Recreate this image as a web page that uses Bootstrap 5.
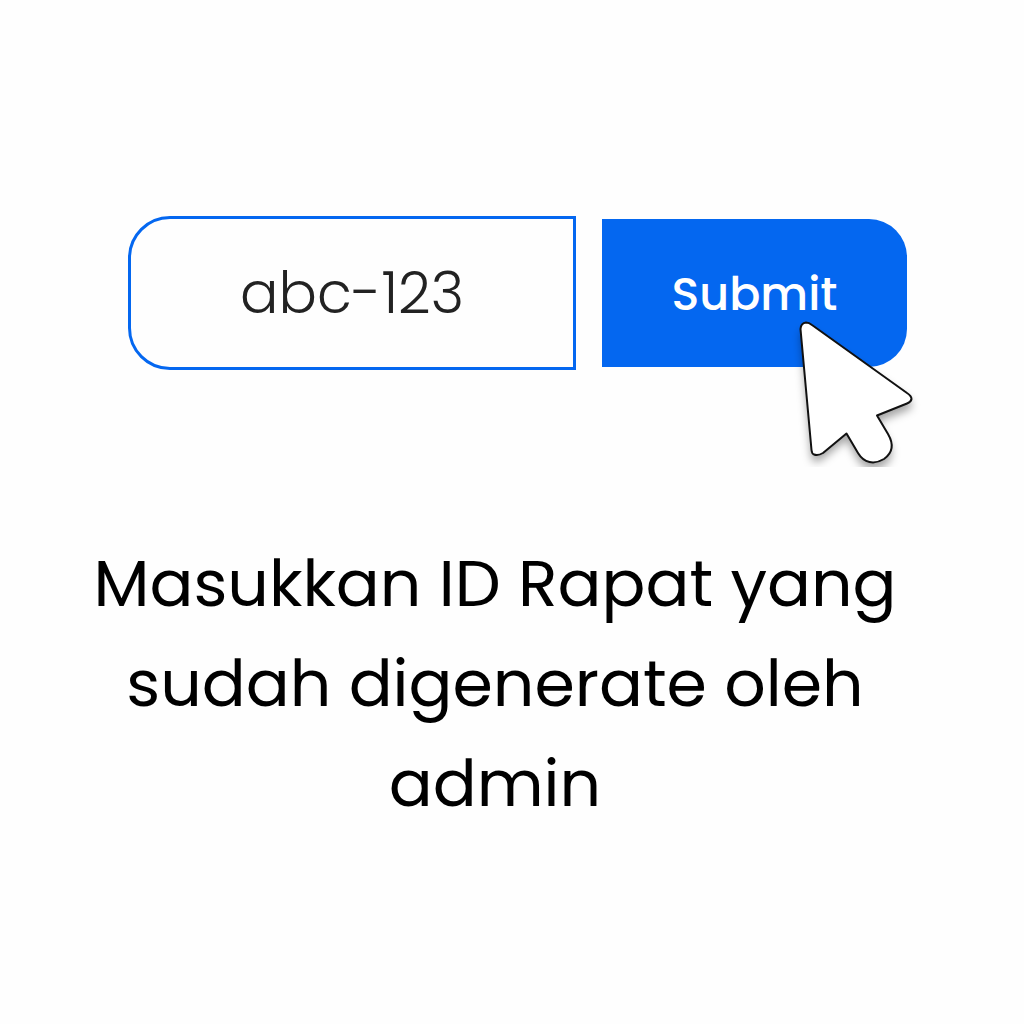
<!DOCTYPE html>
<html lang="id">
<head>
<meta charset="utf-8">
<meta name="viewport" content="width=device-width, initial-scale=1">
<title>Masukkan ID Rapat</title>
<link href="https://cdn.jsdelivr.net/npm/bootstrap@5.3.0/dist/css/bootstrap.min.css" rel="stylesheet">
<style>
body { font-family: Poppins, Inter, "Open Sans", sans-serif; background: #fefefe; color: #000; }
.join-page { padding: 216px 0 0; }
.join-form { gap: 26px; padding: 0 117px 0 128px; }
.id-field { flex: 448 1 0; min-width: 0; }
.id-field .form-control { height: 154px; border: 3px solid #0467f0; border-radius: 42px 0 0 42px; background: #fefefe; color: #222; font-size: 57px; font-weight: 300; padding: 0; }
.send-wrap { flex: 305 1 0; min-width: 0; }
.send-wrap .btn { height: 148px; border: 0; border-radius: 0 38px 38px 0; background: #0467f0; font-size: 46px; font-weight: 500; padding: 8px 0 6px; }
.pointer-art { right: -23px; top: 81px; width: 150px; height: 167px; pointer-events: none; }
.join-hint { margin: 164px 0 0; padding: 0 122px 0 88px; font-size: 65px; line-height: 100px; }
</style>
</head>
<body>
<main class="join-page">
  <form class="join-form d-flex align-items-center">
    <div class="id-field">
      <input class="form-control text-center shadow-none" id="meeting-id" type="text" value="abc-123">
    </div>
    <div class="send-wrap position-relative">
      <button class="btn btn-primary w-100" type="button">Submit</button>
      <svg class="pointer-art position-absolute" viewBox="0 0 150 167" aria-hidden="true">
        <defs><filter id="soft" x="-20%" y="-20%" width="140%" height="140%"><feGaussianBlur stdDeviation="4"/></filter></defs>
        <path transform="translate(0 7)" fill="#000" fill-opacity=".35" filter="url(#soft)" d="M20.500 29Q21 23 26 22.500Q29 22.500 32 25L127 91.500Q132 95 132 98.500Q131 102 127 103.500L97 115.500L108 134C115 146 111 154 104 159C94 165 84 163 78 153L66.500 133L43 152Q38 156 34 154.500Q32 154 31 149Z"/>
        <path fill="#fff" stroke="#111" stroke-width="2" stroke-linejoin="round" d="M20.500 29Q21 23 26 22.500Q29 22.500 32 25L127 93Q131.500 96 131.500 99Q131 102 127 103.500L97 115.500L108 134C115 146 111 154 104 159C94 165 84 163 78 153L66.500 133.500L43 153Q38 156 34 154.500Q32 154 31.500 150Z"/>
      </svg>
    </div>
  </form>
  <label class="join-hint d-block text-center" for="meeting-id">Masukkan ID Rapat yang sudah digenerate oleh admin</label>
</main>
<script src="https://cdn.jsdelivr.net/npm/bootstrap@5.3.0/dist/js/bootstrap.bundle.min.js"></script>
</body>
</html>
